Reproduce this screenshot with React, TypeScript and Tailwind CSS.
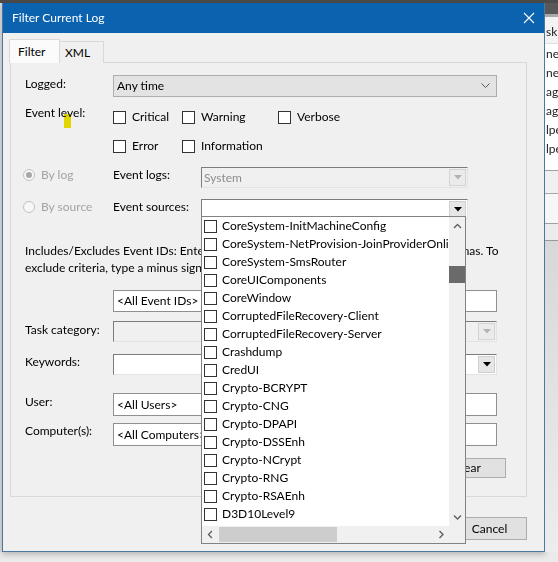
import React from "react";

const sources = [
  "CoreSystem-InitMachineConfig",
  "CoreSystem-NetProvision-JoinProviderOnline",
  "CoreSystem-SmsRouter",
  "CoreUIComponents",
  "CoreWindow",
  "CorruptedFileRecovery-Client",
  "CorruptedFileRecovery-Server",
  "Crashdump",
  "CredUI",
  "Crypto-BCRYPT",
  "Crypto-CNG",
  "Crypto-DPAPI",
  "Crypto-DSSEnh",
  "Crypto-NCrypt",
  "Crypto-RNG",
  "Crypto-RSAEnh",
  "D3D10Level9",
];

function Box() {
  return <span className="block w-[13px] h-[13px] border border-[#333333] bg-white shrink-0" />;
}

function Check({ label, w }: { label: string; w: string }) {
  return (
    <div className={`flex items-center gap-[6px] ${w}`}>
      <Box />
      <span>{label}</span>
    </div>
  );
}

function Tri({ color }: { color: string }) {
  return (
    <svg width="8" height="5" viewBox="0 0 8 5">
      <polygon points="0,0 8,0 4,4.5" fill={color} />
    </svg>
  );
}

function ClassicCombo({
  w,
  h,
  text,
  disabled,
}: {
  w: string;
  h: string;
  text?: string;
  disabled?: boolean;
}) {
  return (
    <div
      className={`${w} ${h} flex items-center border border-t-[#7c7c7c] border-l-[#7c7c7c] border-r-[#e3e3e3] border-b-[#e3e3e3] ${
        disabled ? "bg-[#f0f0f0]" : "bg-white"
      }`}
    >
      <span className={`flex-1 pl-[2px] ${disabled ? "text-[#8d8d8d]" : ""}`}>{text}</span>
      <div
        className={`w-[17px] h-[17px] mr-[1px] flex items-center justify-center border ${
          disabled ? "bg-[#ebebeb] border-[#d4d4d4]" : "bg-[#e6e6e6] border-[#cfcfcf]"
        }`}
      >
        <Tri color={disabled ? "#b3b3b3" : "#000000"} />
      </div>
    </div>
  );
}

function TextInput({ text, h }: { text: string; h: string }) {
  return (
    <div className={`w-[384px] ${h} flex items-center border border-[#8f8f8f] bg-white pl-[3px]`}>
      {text}
    </div>
  );
}

function Radio({ checked }: { checked?: boolean }) {
  return (
    <span className="w-[12px] h-[12px] rounded-full border border-[#c2c2c2] bg-[#f7f7f7] flex items-center justify-center shrink-0">
      {checked && <span className="w-[6px] h-[6px] rounded-full bg-[#a8a8a8]" />}
    </span>
  );
}

function Chevron({ dir }: { dir: "up" | "down" | "left" | "right" }) {
  const pts: Record<string, string> = {
    up: "1,5 4.5,1.5 8,5",
    down: "1,1.5 4.5,5 8,1.5",
    left: "5,1 1.5,4.5 5,8",
    right: "1.5,1 5,4.5 1.5,8",
  };
  const vertical = dir === "up" || dir === "down";
  return (
    <svg width={vertical ? 9 : 7} height={vertical ? 7 : 9} viewBox={vertical ? "0 0 9 7" : "0 0 7 9"}>
      <polyline points={pts[dir]} fill="none" stroke="#606060" strokeWidth="1.4" />
    </svg>
  );
}

function Dialog() {
  return (
    <div className="w-[543px] h-[549px] flex flex-col border-x border-b border-[#4c77a2] shadow-[0_2px_6px_rgba(0,0,0,0.25)]">
      {/* title bar */}
      <div className="h-[30px] bg-[#0b63b0] flex items-center justify-between pl-[9px] pr-[9px] text-white">
        <span className="text-[12px]">Filter Current Log</span>
        <svg width="12" height="12" viewBox="0 0 12 12">
          <path d="M1 1 L11 11 M11 1 L1 11" stroke="#ffffff" strokeWidth="1.1" />
        </svg>
      </div>
      {/* body */}
      <div className="flex-1 bg-[#f0f0f0] pl-[6px] pt-[6px]">
        <div className="w-[518px] flex flex-col">
          {/* tabs */}
          <div className="flex items-end h-[24px] -mb-[1px] relative z-10">
            <div className="w-[51px] h-[24px] bg-[#fbfbfb] border border-b-0 border-[#d9d9d9] pl-[8px] pt-[3px]">
              Filter
            </div>
            <div className="w-[44px] h-[22px] bg-[#f0f0f0] border border-l-0 border-b-0 border-[#d9d9d9] pl-[5px] pt-[2px]">
              XML
            </div>
          </div>
          {/* panel */}
          <div className="ml-[1px] w-[517px] h-[435px] border border-[#d9d9d9] bg-[#f0f0f0] pl-[14px] flex flex-col leading-[16px]">
            {/* Logged */}
            <div className="flex items-start mt-[12px]">
              <span className="w-[88px] pt-[1px]">Logged:</span>
              <div className="w-[384px] h-[22px] border border-[#adadad] bg-[#e3e3e3] flex items-center justify-between pl-[3px] pr-[6px]">
                <span>Any time</span>
                <svg width="9" height="6" viewBox="0 0 9 6">
                  <polyline points="0.5,0.5 4.5,4.5 8.5,0.5" fill="none" stroke="#555555" strokeWidth="1" />
                </svg>
              </div>
            </div>
            {/* Event level */}
            <div className="flex items-start mt-[8px]">
              <span className="w-[88px]">Event level:</span>
              <div className="flex flex-col gap-[5px]">
                <div className="flex items-center h-[24px]">
                  <Check label="Critical" w="w-[69px]" />
                  <Check label="Warning" w="w-[96px]" />
                  <Check label="Verbose" w="w-[90px]" />
                </div>
                <div className="flex items-center h-[24px]">
                  <Check label="Error" w="w-[69px]" />
                  <Check label="Information" w="w-[96px]" />
                </div>
              </div>
            </div>
            {/* By log */}
            <div className="flex items-start mt-[9px] -ml-[2px]">
              <div className="w-[90px] flex items-center gap-[6px] text-[#a3a3a3]">
                <Radio checked />
                <span>By log</span>
              </div>
              <span className="w-[88px]">Event logs:</span>
              <ClassicCombo w="w-[267px]" h="h-[21px]" text="System" disabled />
            </div>
            {/* By source */}
            <div className="flex items-start mt-[11px] -ml-[2px]">
              <div className="w-[90px] flex items-center gap-[6px] text-[#a3a3a3]">
                <Radio />
                <span>By source</span>
              </div>
              <span className="w-[88px]">Event sources:</span>
              <ClassicCombo w="w-[267px]" h="h-[20px]" />
            </div>
            {/* paragraph */}
            <p className="mt-[23px] leading-[17px] whitespace-nowrap">
              Includes/Excludes Event IDs: Enter ID numbers and/or ID ranges separated by commas. To
              <br />
              exclude criteria, type a minus sign first. For example 1,3,5-99,-76
            </p>
            <div className="ml-[88px] mt-[14px]">
              <TextInput text="<All Event IDs>" h="h-[22px]" />
            </div>
            {/* Task category */}
            <div className="flex items-start mt-[9px]">
              <span className="w-[88px] pt-[1px]">Task category:</span>
              <ClassicCombo w="w-[384px]" h="h-[21px]" disabled />
            </div>
            {/* Keywords */}
            <div className="flex items-start mt-[12px]">
              <span className="w-[88px]">Keywords:</span>
              <ClassicCombo w="w-[384px]" h="h-[21px]" />
            </div>
            {/* User */}
            <div className="flex items-start mt-[18px]">
              <span className="w-[88px] pt-[1px]">User:</span>
              <TextInput text="<All Users>" h="h-[23px]" />
            </div>
            {/* Computers */}
            <div className="flex items-start mt-[7px]">
              <span className="w-[88px]">Computer(s):</span>
              <TextInput text="<All Computers>" h="h-[23px]" />
            </div>
            {/* Clear */}
            <div className="flex justify-end pr-[20px] mt-[12px]">
              <div className="w-[78px] h-[20px] bg-[#e1e1e1] border border-[#adadad] flex items-center justify-center">
                Clear
              </div>
            </div>
          </div>
          {/* OK / Cancel */}
          <div className="flex justify-end gap-[6px] mt-[20px]">
            <div className="w-[75px] h-[23px] bg-[#e1e1e1] border border-[#0078d7] flex items-center justify-center">
              OK
            </div>
            <div className="w-[75px] h-[23px] bg-[#e1e1e1] border border-[#adadad] flex items-center justify-center">
              Cancel
            </div>
          </div>
        </div>
      </div>
    </div>
  );
}

function BackgroundWindow() {
  const rows = ["ne", "ne", "agr", "agr", "lpe", "lpe"];
  return (
    <div className="flex-1 flex flex-col overflow-hidden bg-white text-[12px] leading-[19px] text-[#222]">
      <div className="h-[11px] bg-[#585858]" />
      <div className="h-[3px] bg-[#a8a8a8]" />
      <div className="h-[27px] bg-[#f3f3f3] border-b border-[#e0e0e0] flex items-end pb-[2px] pl-[1px] whitespace-nowrap">
        sk (
      </div>
      <div className="flex flex-col">
        {rows.map((r, i) => (
          <div key={i} className="h-[19px] pl-[1px] whitespace-nowrap">
            {r}
          </div>
        ))}
      </div>
      <div className="h-[13px] bg-white border-b border-[#a0a0a0]" />
      <div className="h-[23px] bg-[#f0f0f0] border-b border-[#a8a8a8]" />
      <div className="h-[30px] bg-[#f7f7f7] border-b border-[#a0a0a0]" />
      <div className="h-[17px] bg-[#ececec] border-b border-[#9a9a9a]" />
      <div className="flex-1 bg-gradient-to-b from-[#d8d8d8] to-[#ededed]" />
    </div>
  );
}

function SourceList() {
  return (
    <div className="absolute left-[201px] top-[216px] w-[265px] h-[328px] border border-[#828282] bg-white flex flex-col">
      <div className="flex flex-1 min-h-0">
        <div className="w-[247px] overflow-hidden flex flex-col">
          {sources.map((s) => (
            <div key={s} className="h-[18px] shrink-0 flex items-center gap-[5px] pl-[2px] whitespace-nowrap">
              <Box />
              <span>{s}</span>
            </div>
          ))}
        </div>
        <div className="w-[16px] bg-[#f0f0f0] flex flex-col">
          <div className="h-[18px] flex items-center justify-center">
            <Chevron dir="up" />
          </div>
          <div className="h-[31px]" />
          <div className="h-[17px] bg-[#6a6a6a]" />
          <div className="flex-1" />
          <div className="h-[17px] flex items-center justify-center">
            <Chevron dir="down" />
          </div>
        </div>
      </div>
      <div className="h-[17px] bg-[#f0f0f0] flex">
        <div className="w-[17px] flex items-center justify-center">
          <Chevron dir="left" />
        </div>
        <div className="w-[118px] bg-[#cdcdcd] my-[1px]" />
        <div className="flex-1" />
        <div className="w-[16px] flex items-center justify-center">
          <Chevron dir="right" />
        </div>
        <div className="w-[16px]" />
      </div>
    </div>
  );
}

export default function App() {
  return (
    <div className="relative w-[558px] h-[562px] overflow-hidden bg-[#ebebeb] font-[family-name:Lato,sans-serif] text-[12px] text-black">
      <div className="h-[3px] bg-[#4b4b4b]" />
      <div className="flex h-[549px]">
        <div className="w-[2px] bg-[#dedede]" />
        <Dialog />
        <BackgroundWindow />
      </div>
      <SourceList />
      <div className="absolute left-[64px] top-[114px] w-[7px] h-[14px] bg-[#f0e500] mix-blend-multiply" />
    </div>
  );
}
